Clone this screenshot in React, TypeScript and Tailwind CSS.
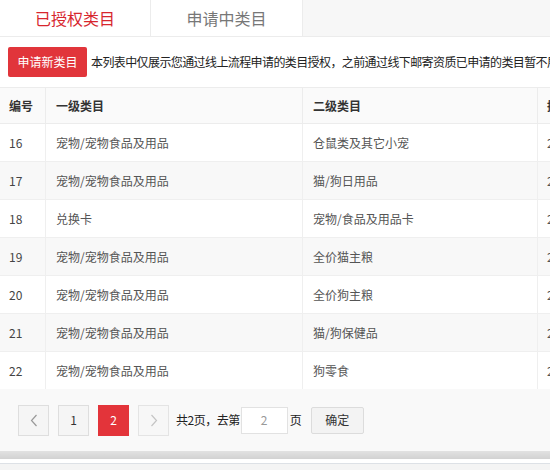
import { FC } from 'react';

const rows: [string, string, string][] = [
  ['16', '宠物/宠物食品及用品', '仓鼠类及其它小宠'],
  ['17', '宠物/宠物食品及用品', '猫/狗日用品'],
  ['18', '兑换卡', '宠物/食品及用品卡'],
  ['19', '宠物/宠物食品及用品', '全价猫主粮'],
  ['20', '宠物/宠物食品及用品', '全价狗主粮'],
  ['21', '宠物/宠物食品及用品', '猫/狗保健品'],
  ['22', '宠物/宠物食品及用品', '狗零食'],
];

const font = { fontFamily: '"Noto Sans CJK SC", "Noto Sans", sans-serif' };

const App: FC = () => {
  return (
    <div className="w-[550px] h-[470px] overflow-hidden bg-white text-[12px] text-[#333]" style={font}>
      {/* tabs */}
      <div className="flex h-[37px] border-b border-[#ececec]">
        <div className="w-[150px] flex items-center justify-center text-[16px] text-[#d7262d]">已授权类目</div>
        <div className="w-[152px] flex items-center justify-center text-[16px] text-[#777] border-l border-[#ececec]">申请中类目</div>
        <div className="flex-1 bg-[#f7f7f7] border-l border-[#ececec]"></div>
      </div>

      {/* notice */}
      <div className="flex items-center h-[50px] pl-[8px] whitespace-nowrap">
        <button className="h-[30px] w-[79px] shrink-0 bg-[#e1353b] text-white text-[12px] rounded-[2px]">申请新类目</button>
        <span className="ml-[4px] text-[#222] tracking-[-0.6px]">本列表中仅展示您通过线上流程申请的类目授权，之前通过线下邮寄资质已申请的类目暂不展示</span>
      </div>

      {/* table */}
      <div className="w-[700px]">
        <div className="flex h-[37px] border-y border-[#ececec] bg-[#fafafa] font-bold text-[#333]">
          <div className="w-[46px] pl-[9px] flex items-center border-r border-[#ececec]">编号</div>
          <div className="w-[257px] pl-[10px] flex items-center border-r border-[#ececec]">一级类目</div>
          <div className="w-[235px] pl-[10px] flex items-center border-r border-[#ececec]">二级类目</div>
          <div className="flex-1 pl-[9px] flex items-center">授权时间</div>
        </div>
        {rows.map(([id, a, b], i) => (
          <div key={id} className={`flex h-[38px] border-b border-[#efefef] ${i % 2 === 1 ? 'bg-[#f8f8f8]' : 'bg-white'}`}>
            <div className="w-[46px] pl-[9px] flex items-center border-r border-[#efefef] text-[#444]">{id}</div>
            <div className="w-[257px] pl-[10px] flex items-center border-r border-[#efefef] text-[#555]">{a}</div>
            <div className="w-[235px] pl-[10px] flex items-center border-r border-[#efefef] text-[#555]">{b}</div>
            <div className="flex-1 pl-[9px] flex items-center text-[#555]">2019-01-01</div>
          </div>
        ))}
      </div>

      {/* pagination */}
      <div className="h-[62px] bg-[#f9f9f9] flex items-center pl-[18px] -mt-px">
        <button className="w-[31px] h-[31px] border border-[#dedede] bg-[#f5f5f5] flex items-center justify-center">
          <svg width="8" height="13" viewBox="0 0 8 13" fill="none" stroke="#999" strokeWidth="1.2"><path d="M6.5 1 1.5 6.5 6.5 12" /></svg>
        </button>
        <button className="ml-[9px] w-[31px] h-[31px] border border-[#dedede] bg-[#f5f5f5] text-[#333] flex items-center justify-center">1</button>
        <button className="ml-[9px] w-[31px] h-[31px] bg-[#e3343a] text-white flex items-center justify-center">2</button>
        <button className="ml-[9px] w-[31px] h-[31px] border border-[#e4e4e4] bg-[#f7f7f7] flex items-center justify-center">
          <svg width="8" height="13" viewBox="0 0 8 13" fill="none" stroke="#c4c4c4" strokeWidth="1.2"><path d="M1.5 1 6.5 6.5 1.5 12" /></svg>
        </button>
        <span className="ml-[7px] text-[#222] tracking-[-0.5px]">共2页，去第</span>
        <div className="ml-[1px] w-[47px] h-[27px] bg-white border border-[#e2e2e2] flex items-center justify-center text-[#999]">2</div>
        <span className="ml-[2px] text-[#222]">页</span>
        <button className="ml-[9px] w-[53px] h-[27px] border border-[#dcdcdc] bg-[#f3f3f3] text-[#333] rounded-[2px]">确定</button>
      </div>
      <div className="h-[8px] bg-gradient-to-b from-[#e2e2e2] to-[#d2d2d2]"></div>
      <div className="h-[4px] bg-white"></div>
      <div className="h-px bg-[#dde1e6]"></div>
      <div className="h-[20px] bg-[#f4f4f4]"></div>
    </div>
  );
};

export default App;
